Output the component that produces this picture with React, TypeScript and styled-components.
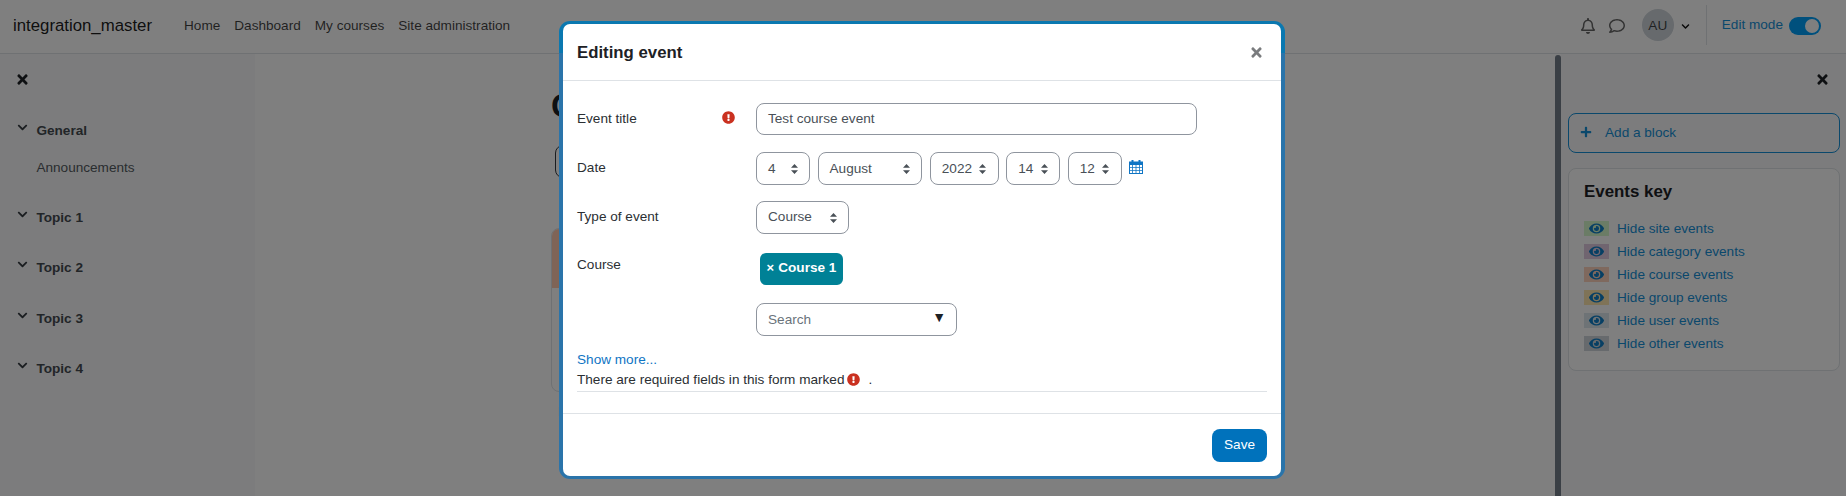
import React from "react";
import styled, { createGlobalStyle } from "styled-components";
import { FaTimes, FaChevronDown, FaExclamationCircle, FaEye, FaPlus, FaRegBell, FaRegComment } from "react-icons/fa";

const Global = createGlobalStyle`
  html, body { margin: 0; padding: 0; background: #fff; }
  body { font-family: "Liberation Sans", Arial, sans-serif; font-size: 13.6px; line-height: 21px; color: #1d2125; }
  * { box-sizing: border-box; }
`;

const Page = styled.div`
  position: relative;
  width: 1846px;
  height: 496px;
  overflow: hidden;
`;

const TopNav = styled.header`
  height: 54px;
  border-bottom: 1px solid #dee2e6;
  display: flex;
  align-items: center;
  padding: 0 25px 3px 13px;
`;
const Brand = styled.div`
  font-size: 16.8px;
  color: rgba(0, 0, 0, 0.9);
  width: 171px;
`;
const NavLinks = styled.nav`
  display: flex;
  gap: 14px;
  flex: 1;
`;
const NavLink = styled.span`
  color: rgba(0, 0, 0, 0.75);
`;
const NavIcons = styled.div`
  display: flex;
  align-items: center;
  gap: 13px;
  color: rgba(0, 0, 0, 0.6);
  font-size: 16px;
  margin: 2px 17px 0 0;
`;
const Avatar = styled.div`
  width: 32px;
  height: 32px;
  border-radius: 50%;
  background: #ced4da;
  color: rgba(0, 0, 0, 0.7);
  display: flex;
  align-items: center;
  justify-content: center;
`;
const UserChevron = styled.span`
  display: flex;
  font-size: 9px;
  margin: 2px 0 0 7px;
  color: #111;
`;
const Divider = styled.div`
  width: 1px;
  height: 40px;
  background: #dee2e6;
  margin: 0 15px 0 16px;
`;
const EditMode = styled.span`
  color: #1590d8;
  margin: -2px 6px 0 0;
`;
const Toggle = styled.div`
  width: 32px;
  height: 18px;
  margin-top: 2px;
  border-radius: 9px;
  background: #00a0fa;
  display: flex;
  justify-content: flex-end;
  align-items: center;
  padding-right: 2px;
`;
const Knob = styled.div`
  width: 14px;
  height: 14px;
  border-radius: 50%;
  background: #fff;
`;

const Columns = styled.div`
  display: flex;
  height: 442px;
`;
const LeftDrawer = styled.aside`
  width: 255px;
  background: #f8f9fa;
  padding: 18px 14px 0 17px;
`;
const CloseIcon = styled.div`
  display: flex;
  font-size: 15px;
  height: 16px;
  color: #1d2125;
`;
const LeftClose = styled(CloseIcon)`
  margin-left: -2px;
`;
const Section = styled.div<{ $top: number }>`
  display: flex;
  align-items: center;
  height: 21px;
  margin-top: ${(p) => p.$top}px;
  font-weight: 700;
  color: #444a50;
`;
const SectionChevron = styled.span`
  display: flex;
  width: 19.4px;
  font-size: 11px;
  margin-top: -6px;
  color: #343a40;
`;
const SectionItem = styled.div`
  margin: 16px 0 0 19.4px;
  color: #555b61;
`;

const Main = styled.main`
  flex: 1;
  padding: 32px 0 0 296px;
`;
const Heading = styled.h1`
  margin: 0;
  font-size: 33px;
  line-height: 40px;
  font-weight: 700;
  white-space: nowrap;
`;
const OutlineButton = styled.div`
  margin: 19px 0 0 4px;
  width: 120px;
  height: 33px;
  border: 1px solid #343a40;
  border-radius: 8px;
`;
const CourseCard = styled.div`
  margin-top: 50px;
  width: 300px;
  height: 164px;
  border: 1px solid #dee2e6;
  border-radius: 8px;
  overflow: hidden;
`;
const CardImage = styled.div`
  height: 59px;
  background: #ffc0a0;
  opacity: 0.85;
`;
const UnderLink = styled.div`
  margin: 9px 0 0 7px;
  color: #0f6cbf;
`;

const Scrollbar = styled.div`
  width: 6px;
  margin-top: 1px;
  background: #747f8a;
  border-radius: 3px 3px 0 0;
`;
const RightDrawer = styled.aside`
  width: 285px;
  background: #f8f9fa;
  padding: 18px 6px 0 7px;
`;
const RightClose = styled(CloseIcon)`
  justify-content: flex-end;
  padding-right: 10px;
`;
const AddBlock = styled.div`
  height: 40px;
  margin-top: 25px;
  border: 1px solid #1590d8;
  border-radius: 8px;
  display: flex;
  align-items: center;
  padding: 0 0 2px 11px;
  color: #1590d8;
`;
const PlusIcon = styled.span`
  display: flex;
  width: 25px;
  font-size: 12px;
`;
const BlockCard = styled.section`
  margin-top: 15px;
  height: 203px;
  background: #fff;
  border: 1px solid #dee2e6;
  border-radius: 8px;
  padding: 10px 15px;
`;
const BlockTitle = styled.h3`
  margin: 0 0 12px;
  font-size: 16.9px;
  line-height: 26px;
  font-weight: 700;
`;
const KeyRow = styled.div`
  display: flex;
  align-items: center;
  height: 23px;
  gap: 8px;
  color: #1590d8;
`;
const Swatch = styled.span<{ $bg: string }>`
  width: 25px;
  height: 15px;
  background: ${(p) => p.$bg};
  color: #0f7fc8;
  display: flex;
  align-items: center;
  justify-content: center;
  font-size: 15px;
`;

const Backdrop = styled.div`
  position: absolute;
  inset: 0;
  background: rgba(0, 0, 0, 0.5);
`;
const ModalFrame = styled.div`
  position: absolute;
  left: 559px;
  top: 21px;
  width: 726px;
  height: 458px;
  padding: 3px 4px;
  border-radius: 11px;
  background: linear-gradient(to bottom, #0a78b0 0 32px, #2a74aa 32px);
`;
const Modal = styled.div`
  height: 100%;
  background: #fff;
  border-radius: 7px;
  display: flex;
  flex-direction: column;
`;
const ModalHeader = styled.div`
  height: 57px;
  flex: none;
  border-bottom: 1px solid #dee2e6;
  display: flex;
  align-items: center;
  justify-content: space-between;
  padding: 1px 14px 0;
`;
const ModalTitle = styled.h5`
  margin: 0;
  font-size: 16.8px;
  font-weight: 700;
`;
const ModalClose = styled.span`
  display: flex;
  font-size: 15px;
  color: #7a7c7e;
  margin-right: 3px;
`;
const ModalBody = styled.div`
  flex: 1;
  padding: 22px 14px 0;
`;
const FormRow = styled.div<{ $h: number }>`
  display: flex;
  height: ${(p) => p.$h}px;
`;
const Label = styled.div<{ $dy?: number }>`
  width: 179px;
  flex: none;
  padding-top: ${(p) => p.$dy ?? 0}px;
  display: flex;
  justify-content: space-between;
  align-items: flex-start;
  color: #2b2f33;
`;
const RequiredIcon = styled.span`
  display: inline-flex;
  color: #ca3120;
  font-size: 13px;
`;
const LabelRequired = styled(RequiredIcon)`
  margin: 3px 21px 0 0;
`;
const TextInput = styled.div`
  width: 441px;
  height: 32px;
  padding: 0 11px 2px;
  border: 1px solid #8f959e;
  border-radius: 8px;
  display: flex;
  align-items: center;
  color: #495057;
`;
const Controls = styled.div`
  display: flex;
  gap: 7.5px;
  align-items: flex-start;
`;
const SelectBox = styled.div<{ $w: number; $lift?: number }>`
  width: ${(p) => p.$w}px;
  height: 33px;
  border: 1px solid #8f959e;
  border-radius: 8px;
  padding: 0 11.5px 0 11px;
  display: flex;
  align-items: center;
  justify-content: space-between;
  color: #495057;
`;
const SelectText = styled.span<{ $lift?: number }>`
  margin-top: ${(p) => -(p.$lift ?? 0)}px;
`;
const CalendarIcon = styled.svg`
  width: 14px;
  height: 15px;
  margin-top: 7px;
  color: #0f75c4;
`;
const Chip = styled.div`
  margin: 4px 0 0 4px;
  width: 83px;
  height: 32px;
  padding-bottom: 4px;
  background: #008196;
  border-radius: 6px;
  color: #fff;
  font-weight: 700;
  display: flex;
  align-items: center;
  justify-content: center;
  gap: 4px;
`;
const ChipX = styled.span`
  font-size: 13px;
`;
const SearchBox = styled.div`
  width: 201px;
  height: 33px;
  border: 1px solid #8f959e;
  border-radius: 8px;
  padding: 0 10px 0 11px;
  display: flex;
  align-items: center;
  justify-content: space-between;
  color: #6a737b;
`;
const DownGlyph = styled.span`
  color: #1d2125;
  font-size: 14px;
  margin: -5px 0 0 0;
`;
const ShowMore = styled.div`
  color: #0f75c4;
  margin-top: 14px;
  line-height: 20px;
`;
const RequiredNote = styled.div`
  height: 22px;
  padding-bottom: 2px;
  border-bottom: 1px solid #dee2e6;
  display: flex;
  align-items: center;
  color: #2b2f33;
`;
const NoteIcon = styled(RequiredIcon)`
  margin: 0 8px 0 3px;
`;
const ModalFooter = styled.div`
  height: 63px;
  flex: none;
  border-top: 1px solid #dee2e6;
  display: flex;
  justify-content: flex-end;
  padding: 15px 14px 0;
`;
const SaveButton = styled.div`
  width: 55px;
  height: 33px;
  padding-bottom: 2px;
  border-radius: 8px;
  background: #0072bc;
  color: #fff;
  display: flex;
  align-items: center;
  justify-content: center;
`;

const Updown = () => (
  <svg width="7" height="10" viewBox="0 0 7 10" fill="#495057">
    <path d="M3.5 0 7 3.8H0ZM3.5 10 0 6.2h7Z" />
  </svg>
);

const keys = [
  ["Hide site events", "#d6f8cd"],
  ["Hide category events", "#e0cbe0"],
  ["Hide course events", "#ffd3bd"],
  ["Hide group events", "#fee7ae"],
  ["Hide user events", "#dce7ec"],
  ["Hide other events", "#ced4da"],
];
const dateFields: [string, number][] = [
  ["4", 54],
  ["August", 104.8],
  ["2022", 69],
  ["14", 54],
  ["12", 54],
];

export default function App() {
  return (
    <Page>
      <Global />
      <TopNav>
        <Brand>integration_master</Brand>
        <NavLinks>
          <NavLink>Home</NavLink>
          <NavLink>Dashboard</NavLink>
          <NavLink>My courses</NavLink>
          <NavLink>Site administration</NavLink>
        </NavLinks>
        <NavIcons>
          <FaRegBell />
          <FaRegComment />
        </NavIcons>
        <Avatar>AU</Avatar>
        <UserChevron><FaChevronDown /></UserChevron>
        <Divider />
        <EditMode>Edit mode</EditMode>
        <Toggle><Knob /></Toggle>
      </TopNav>
      <Columns>
        <LeftDrawer>
          <LeftClose><FaTimes /></LeftClose>
          <Section $top={32}><SectionChevron><FaChevronDown /></SectionChevron>General</Section>
          <SectionItem>Announcements</SectionItem>
          <Section $top={29}><SectionChevron><FaChevronDown /></SectionChevron>Topic 1</Section>
          <Section $top={29}><SectionChevron><FaChevronDown /></SectionChevron>Topic 2</Section>
          <Section $top={30}><SectionChevron><FaChevronDown /></SectionChevron>Topic 3</Section>
          <Section $top={29}><SectionChevron><FaChevronDown /></SectionChevron>Topic 4</Section>
        </LeftDrawer>
        <Main>
          <Heading>Course 1</Heading>
          <OutlineButton />
          <CourseCard><CardImage /></CourseCard>
          <UnderLink>Import</UnderLink>
        </Main>
        <Scrollbar />
        <RightDrawer>
          <RightClose><FaTimes /></RightClose>
          <AddBlock><PlusIcon><FaPlus /></PlusIcon>Add a block</AddBlock>
          <BlockCard>
            <BlockTitle>Events key</BlockTitle>
            {keys.map(([label, bg]) => (
              <KeyRow key={label}>
                <Swatch $bg={bg}><FaEye /></Swatch>
                {label}
              </KeyRow>
            ))}
          </BlockCard>
        </RightDrawer>
      </Columns>
      <Backdrop />
      <ModalFrame>
        <Modal>
          <ModalHeader>
            <ModalTitle>Editing event</ModalTitle>
            <ModalClose><FaTimes /></ModalClose>
          </ModalHeader>
          <ModalBody>
            <FormRow $h={49}>
              <Label $dy={5}>Event title<LabelRequired><FaExclamationCircle /></LabelRequired></Label>
              <TextInput>Test course event</TextInput>
            </FormRow>
            <FormRow $h={49}>
              <Label $dy={5}>Date</Label>
              <Controls>
                {dateFields.map(([v, w]) => (
                  <SelectBox key={v} $w={w}><SelectText>{v}</SelectText><Updown /></SelectBox>
                ))}
                <CalendarIcon viewBox="0 0 14 15">
                  <path fill="currentColor" d="M0 2.5h2.5V1h2v1.5h5V1h2v1.5H14V15H0Z" />
                  <path fill="#fff" d="M1 6h2.2v2H1zM4 6h2.6v2H4zM7.4 6H10v2H7.4zM10.8 6H13v2h-2.2zM1 8.8h2.2v2.1H1zM4 8.8h2.6v2.1H4zM7.4 8.8H10v2.1H7.4zM10.8 8.8H13v2.1h-2.2zM1 11.7h2.2V14H1zM4 11.7h2.6V14H4zM7.4 11.7H10V14H7.4zM10.8 11.7H13V14h-2.2z" />
                </CalendarIcon>
              </Controls>
            </FormRow>
            <FormRow $h={48}>
              <Label $dy={5}>Type of event</Label>
              <SelectBox $w={93}><SelectText $lift={3}>Course</SelectText><Updown /></SelectBox>
            </FormRow>
            <FormRow $h={54}>
              <Label $dy={5}>Course</Label>
              <Chip><ChipX>×</ChipX>Course 1</Chip>
            </FormRow>
            <FormRow $h={33}>
              <Label />
              <SearchBox>Search<DownGlyph>▼</DownGlyph></SearchBox>
            </FormRow>
            <ShowMore>Show more...</ShowMore>
            <RequiredNote>
              There are required fields in this form marked
              <NoteIcon><FaExclamationCircle /></NoteIcon>.
            </RequiredNote>
          </ModalBody>
          <ModalFooter>
            <SaveButton>Save</SaveButton>
          </ModalFooter>
        </Modal>
      </ModalFrame>
    </Page>
  );
}
